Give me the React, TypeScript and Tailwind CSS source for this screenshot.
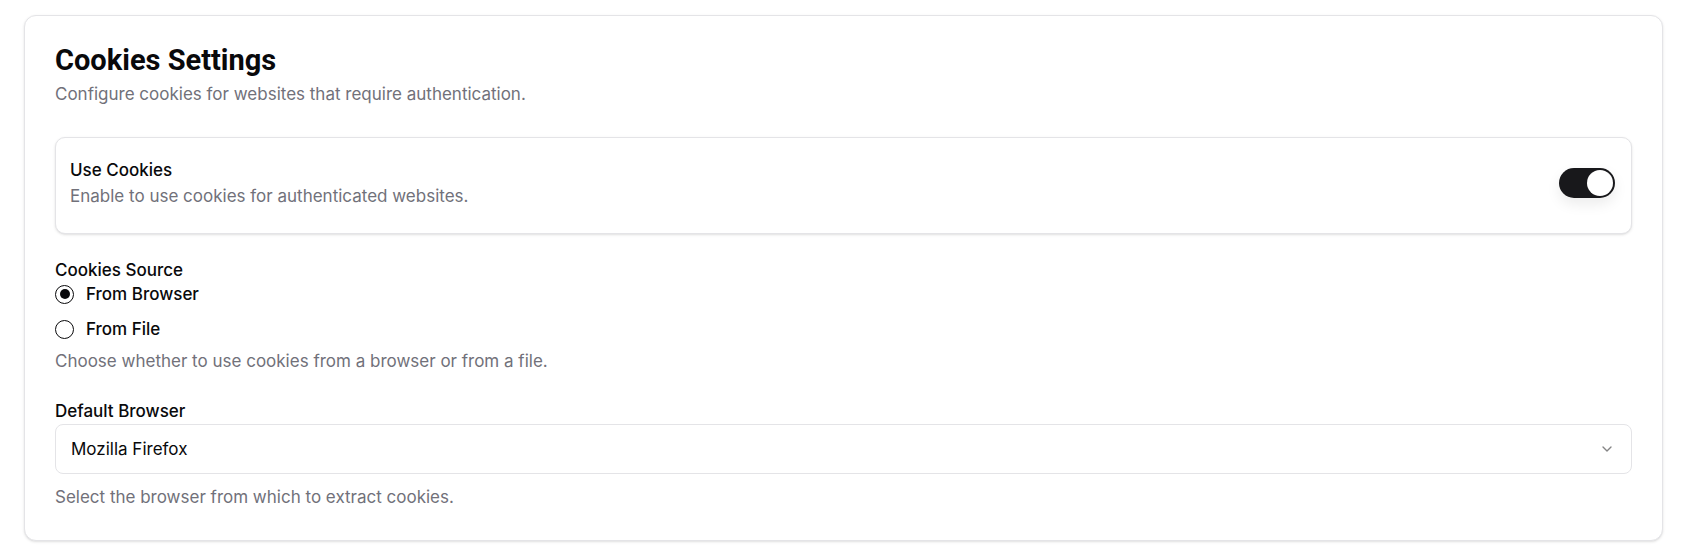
import React from "react";

export default function App() {
  const body = { fontFamily: "Inter, 'Liberation Sans', sans-serif" };
  return (
    <div className="min-h-[549px] bg-white pt-[15px] pl-[24px] pr-[19px] pb-[10px]" style={body}>
      <div className="rounded-xl border border-[#e4e4e7] bg-white shadow-sm pt-[26px] px-[30px] pb-[31px]">
        <h1
          className="text-[29px] leading-[36px] font-bold text-[#09090b]"
          style={{ fontFamily: "Roboto, 'Liberation Sans', sans-serif" }}
        >
          Cookies Settings
        </h1>
        <p className="mt-[4px] text-[17px] leading-[24px] text-[#71717a]">
          Configure cookies for websites that require authentication.
        </p>

        <div className="mt-[31px] flex items-center justify-between rounded-[10px] border border-[#e4e4e7] bg-white shadow-sm pl-[14px] pr-4 pt-[20px] pb-[25px]">
          <div className="flex flex-col gap-[2px]">
            <div className="text-[17px] leading-[24px] font-medium text-[#09090b]">Use Cookies</div>
            <div className="text-[17px] leading-[24px] text-[#71717a]">
              Enable to use cookies for authenticated websites.
            </div>
          </div>
          <div className="flex h-[30px] w-[56px] items-center justify-end rounded-full bg-[#18181b] p-[2px] shadow-[0_6px_14px_rgba(0,0,0,0.08)]">
            <div className="h-[26px] w-[26px] rounded-full bg-white" />
          </div>
        </div>

        <div className="mt-[24px] text-[17px] leading-[24px] font-medium text-[#09090b]">Cookies Source</div>
        <div className="flex flex-col gap-[11px]">
          <label className="flex h-[24px] items-center gap-3">
            <span className="flex h-[19px] w-[19px] items-center justify-center rounded-full border-[1.5px] border-[#09090b]">
              <span className="h-[10px] w-[10px] rounded-full bg-[#09090b]" />
            </span>
            <span className="text-[17px] leading-[24px] font-medium text-[#09090b]">From Browser</span>
          </label>
          <label className="flex h-[24px] items-center gap-3">
            <span className="flex h-[19px] w-[19px] items-center justify-center rounded-full border-[1.5px] border-[#09090b]" />
            <span className="text-[17px] leading-[24px] font-medium text-[#09090b]">From File</span>
          </label>
        </div>
        <p className="mt-[8px] text-[17px] leading-[24px] text-[#71717a]">
          Choose whether to use cookies from a browser or from a file.
        </p>

        <div className="mt-[26px] text-[17px] leading-[24px] font-medium text-[#09090b]">Default Browser</div>
        <div className="mt-[1px] flex h-[50px] items-center justify-between rounded-lg border border-[#e4e4e7] bg-white pl-[15px] pr-4">
          <span className="text-[17px] leading-[24px] text-[#09090b]">Mozilla Firefox</span>
          <svg width="16" height="16" viewBox="0 0 24 24" fill="none" stroke="#09090b" strokeOpacity="0.5" strokeWidth="2" strokeLinecap="round" strokeLinejoin="round">
            <path d="m6 9 6 6 6-6" />
          </svg>
        </div>
        <p className="mt-[11px] text-[17px] leading-[24px] text-[#71717a]">
          Select the browser from which to extract cookies.
        </p>
      </div>
    </div>
  );
}
